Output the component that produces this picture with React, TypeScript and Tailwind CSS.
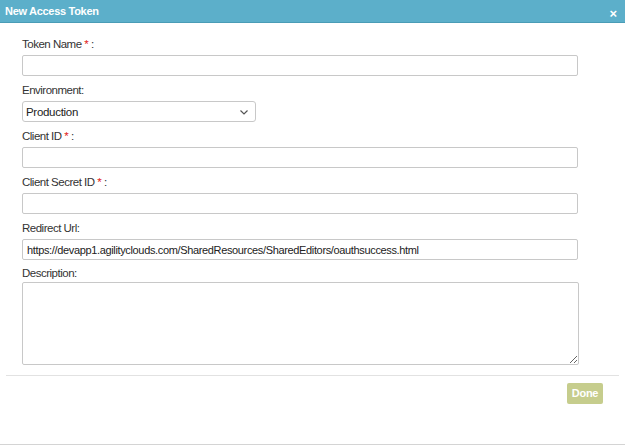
export default function App() {
  const label = "block h-[14px] text-[11.5px] leading-[14px] text-[#333] mb-[4px] tracking-[-0.5px]";
  const input =
    "block h-[21px] w-[556px] rounded-[2px] border border-[#c8c8c8] bg-white px-[4px] text-[11px] tracking-[-0.35px] text-[#222] outline-none";
  const Req = () => (
    <>
      {" "}
      <span className="text-[#e02020]">*</span> :
    </>
  );

  return (
    <div className="h-[445px] w-[625px] bg-white font-['Liberation_Sans',Arial,sans-serif] border-b border-[#d4d4d4]">
      <div className="flex h-[23px] items-center justify-between border-b border-[#4a9cb6] bg-[#5cafca] pl-[5px] pr-[8px]">
        <span className="text-[11px] font-bold leading-none tracking-[-0.3px] text-white">New Access Token</span>
        <span className="mt-[4px] text-[13px] font-bold leading-none text-white">×</span>
      </div>

      <div className="px-[22px] pt-[14px]">
        <div className="mb-[7px]">
          <label className={label}>
            Token Name<Req />
          </label>
          <input className={input} />
        </div>

        <div className="mb-[7px]">
          <label className={label}>Environment:</label>
          <div className="relative h-[21px] w-[234px] rounded-[3px] border border-[#c8c8c8] bg-white">
            <span className="absolute left-[3px] top-[3px] text-[11.5px] leading-[14px] tracking-[-0.3px] text-[#222]">
              Production
            </span>
            <svg
              className="absolute right-[7px] top-[8px]"
              width="8"
              height="5"
              viewBox="0 0 8 5"
              fill="none"
              stroke="#555"
              strokeWidth="1.2"
            >
              <path d="M0.5 0.5 L4 4 L7.5 0.5" />
            </svg>
          </div>
        </div>

        <div className="mb-[7px]">
          <label className={label}>
            Client ID<Req />
          </label>
          <input className={input} />
        </div>

        <div className="mb-[7px]">
          <label className={label}>
            Client Secret ID<Req />
          </label>
          <input className={input} />
        </div>

        <div className="mb-[6px]">
          <label className={label}>Redirect Url:</label>
          <input
            className={input}
            defaultValue="https://devapp1.agilityclouds.com/SharedResources/SharedEditors/oauthsuccess.html"
          />
        </div>

        <div>
          <label className="mb-[2px] block h-[14px] text-[11.5px] leading-[14px] tracking-[-0.5px] text-[#333]">
            Description:
          </label>
          <textarea className="block h-[83px] w-[557px] resize-y rounded-[2px] border border-[#c8c8c8] bg-white px-[4px] text-[12px] outline-none" />
        </div>
      </div>

      <div className="mx-[6px] mt-[10px] border-t border-[#e2e2e2]" />

      <div className="flex justify-end px-[22px] pt-[7px]">
        <button className="h-[21px] w-[36px] rounded-[2px] bg-[#c6cd8d] text-[11px] font-bold tracking-[-0.3px] text-white">
          Done
        </button>
      </div>
    </div>
  );
}
